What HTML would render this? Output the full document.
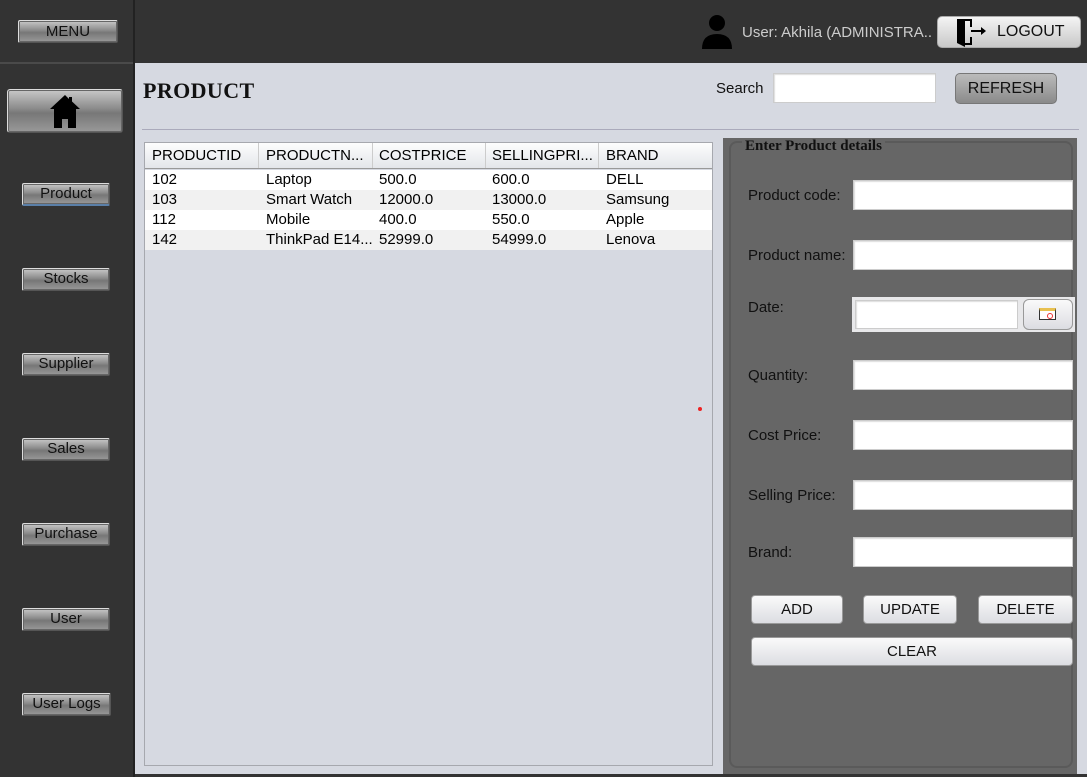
<!DOCTYPE html>
<html><head><meta charset="utf-8"><style>
*{box-sizing:border-box;margin:0;padding:0}
body{width:1087px;height:777px;background:#333;font-family:"Liberation Sans",sans-serif;position:relative;overflow:hidden;font-size:15px}
.a{position:absolute}
.sb{background:linear-gradient(#c8c8c8,#8a8a8a 45%,#777 55%,#999);border:1px solid #ddd;border-right-color:#555;border-bottom-color:#555;border-radius:2px;color:#111;text-align:center;font-size:15px;line-height:20px;box-shadow:inset 0 0 0 1px #666}
.btn{background:linear-gradient(#fafafa,#dcdde2);border:1px solid #999;border-radius:4px;text-align:center;color:#111;font-size:15px}
.inp{background:#fff;border:1px solid #ccc;box-shadow:inset 1px 1px 1px #ddd}
.lbl{color:#111;font-size:15px}
.row{position:absolute;left:0;width:567px;height:20px;font-size:15px;line-height:20px}
.row span,.hd span{position:absolute;left:0}
</style></head><body>
<div class="a" style="left:0;top:0;width:133px;height:777px;background:#333"></div>
<div class="a" style="left:0;top:62px;width:133px;height:2px;background:#4a4a4a"></div>
<div class="a" style="left:133px;top:0;width:2px;height:777px;background:#222"></div>
<div class="a" style="left:135px;top:63px;width:952px;height:711px;background:#d6d9e1"></div>
<div class="a sb" style="left:18px;top:20px;width:100px;height:23px;line-height:21px">MENU</div>
<div class="a sb" style="left:7px;top:89px;width:116px;height:44px;border-radius:3px"></div>
<svg class="a" style="left:47px;top:93px" width="36" height="36" viewBox="0 0 36 36"><path d="M18 2 L3 16 L7 16 L7 35 L15 35 L15 26 L21 26 L21 35 L29 35 L29 16 L33 16 L25 8.5 L25 4 L22 4 L22 6 Z" fill="#000"/></svg>
<div class="a sb" style="left:22px;top:183px;width:88px;height:23px;border-bottom:2px solid #5a7fa8">Product</div>
<div class="a sb" style="left:22px;top:268px;width:88px;height:23px">Stocks</div>
<div class="a sb" style="left:22px;top:353px;width:88px;height:23px">Supplier</div>
<div class="a sb" style="left:22px;top:438px;width:88px;height:23px">Sales</div>
<div class="a sb" style="left:22px;top:523px;width:88px;height:23px">Purchase</div>
<div class="a sb" style="left:22px;top:608px;width:88px;height:23px">User</div>
<div class="a sb" style="left:22px;top:693px;width:89px;height:23px">User Logs</div>
<svg class="a" style="left:701px;top:13px" width="32" height="36" viewBox="0 0 32 36"><circle cx="16" cy="10" r="8" fill="#000"/><path d="M1 36 Q1 21 16 21 Q31 21 31 36Z" fill="#000"/></svg>
<div class="a" style="left:742px;top:24px;color:#ccc;font-size:15px">User: Akhila (ADMINISTRA..</div>
<div class="a btn" style="left:937px;top:16px;width:144px;height:32px;border-color:#aaa;border-radius:5px;background:linear-gradient(#f4f4f4,#c8c8c8)"></div>
<svg class="a" style="left:955px;top:17px" width="36" height="30" viewBox="0 0 36 30"><path d="M2 2 H17 V10 H15 V4 H10 V26 H15 V20 H17 V28 H10 V30 L2 26 Z" fill="#000"/><path d="M16 14 H27" stroke="#000" stroke-width="2"/><path d="M26 10 L31 14 L26 18Z" fill="#000"/></svg>
<div class="a" style="left:997px;top:23px;font-size:16px;color:#111">LOGOUT</div>
<div class="a" style="left:143px;top:78px;font-family:'Liberation Serif',serif;font-weight:bold;font-size:22px;letter-spacing:0.4px;color:#111">PRODUCT</div>
<div class="a lbl" style="left:716px;top:80px">Search</div>
<div class="a inp" style="left:773px;top:73px;width:163px;height:30px"></div>
<div class="a" style="left:955px;top:73px;width:102px;height:31px;border-radius:5px;background:linear-gradient(#bbb,#8a8a8a);border:1px solid #777;text-align:center;line-height:29px;font-size:16px;color:#111">REFRESH</div>
<div class="a" style="left:142px;top:129px;width:937px;height:1px;background:#aab"></div>
<div class="a" style="left:144px;top:142px;width:569px;height:624px;border:1px solid #a6a8ae;background:#d6d9e1">
<div class="hd a" style="left:0;top:0;width:567px;height:26px;background:linear-gradient(#fdfdfd,#e4e6ea);border-bottom:1px solid #999;font-size:15px;line-height:25px">
<span style="left:7px">PRODUCTID</span><span style="left:121px">PRODUCTN...</span><span style="left:234px">COSTPRICE</span><span style="left:347px">SELLINGPRI...</span><span style="left:461px">BRAND</span>
<i class="a" style="left:113px;top:0;width:1px;height:25px;background:#ccc"></i><i class="a" style="left:227px;top:0;width:1px;height:25px;background:#ccc"></i><i class="a" style="left:340px;top:0;width:1px;height:25px;background:#ccc"></i><i class="a" style="left:453px;top:0;width:1px;height:25px;background:#ccc"></i>
</div>
<div class="row" style="top:27px;background:#fff"><span style="left:7px">102</span><span style="left:121px">Laptop</span><span style="left:234px">500.0</span><span style="left:347px">600.0</span><span style="left:461px">DELL</span></div>
<div class="row" style="top:47px;background:#f1f1f1"><span style="left:7px">103</span><span style="left:121px">Smart Watch</span><span style="left:234px">12000.0</span><span style="left:347px">13000.0</span><span style="left:461px">Samsung</span></div>
<div class="row" style="top:67px;background:#fff"><span style="left:7px">112</span><span style="left:121px">Mobile</span><span style="left:234px">400.0</span><span style="left:347px">550.0</span><span style="left:461px">Apple</span></div>
<div class="row" style="top:87px;background:#f1f1f1"><span style="left:7px">142</span><span style="left:121px">ThinkPad E14...</span><span style="left:234px">52999.0</span><span style="left:347px">54999.0</span><span style="left:461px">Lenova</span></div>
</div>
<div class="a" style="left:698px;top:407px;width:4px;height:4px;border-radius:2px;background:#e22"></div>
<div class="a" style="left:723px;top:138px;width:354px;height:636px;background:#666"></div>
<div class="a" style="left:729px;top:141px;width:344px;height:627px;border:2px solid #5a5a5a;border-radius:8px"></div>
<div class="a" style="left:742px;top:138px;padding:0 3px;background:#666;font-family:'Liberation Serif',serif;font-weight:bold;font-size:15px;color:#111">Enter Product details</div>
<div class="a lbl" style="left:748px;top:187px">Product code:</div>
<div class="a inp" style="left:853px;top:180px;width:220px;height:30px"></div>
<div class="a lbl" style="left:748px;top:247px">Product name:</div>
<div class="a inp" style="left:853px;top:240px;width:220px;height:30px"></div>
<div class="a lbl" style="left:748px;top:299px">Date:</div>
<div class="a" style="left:852px;top:297px;width:223px;height:35px;background:#e8e8ea"></div>
<div class="a inp" style="left:855px;top:300px;width:163px;height:29px"></div>
<div class="a btn" style="left:1023px;top:299px;width:50px;height:31px;border-radius:6px"></div>
<div class="a" style="left:1039px;top:308px;width:17px;height:12px;background:#fff;border:1px solid #333;border-top:3px solid #e8c050"><i class="a" style="left:7px;top:2px;width:6px;height:6px;border:1px solid #e33;border-radius:50%"></i></div>
<div class="a lbl" style="left:748px;top:367px">Quantity:</div>
<div class="a inp" style="left:853px;top:360px;width:220px;height:30px"></div>
<div class="a lbl" style="left:748px;top:427px">Cost Price:</div>
<div class="a inp" style="left:853px;top:420px;width:220px;height:30px"></div>
<div class="a lbl" style="left:748px;top:487px">Selling Price:</div>
<div class="a inp" style="left:853px;top:480px;width:220px;height:30px"></div>
<div class="a lbl" style="left:748px;top:544px">Brand:</div>
<div class="a inp" style="left:853px;top:537px;width:220px;height:30px"></div>
<div class="a btn" style="left:751px;top:595px;width:92px;height:29px;line-height:27px">ADD</div>
<div class="a btn" style="left:863px;top:595px;width:94px;height:29px;line-height:27px">UPDATE</div>
<div class="a btn" style="left:978px;top:595px;width:95px;height:29px;line-height:27px">DELETE</div>
<div class="a btn" style="left:751px;top:637px;width:322px;height:29px;line-height:27px">CLEAR</div>
</body></html>
